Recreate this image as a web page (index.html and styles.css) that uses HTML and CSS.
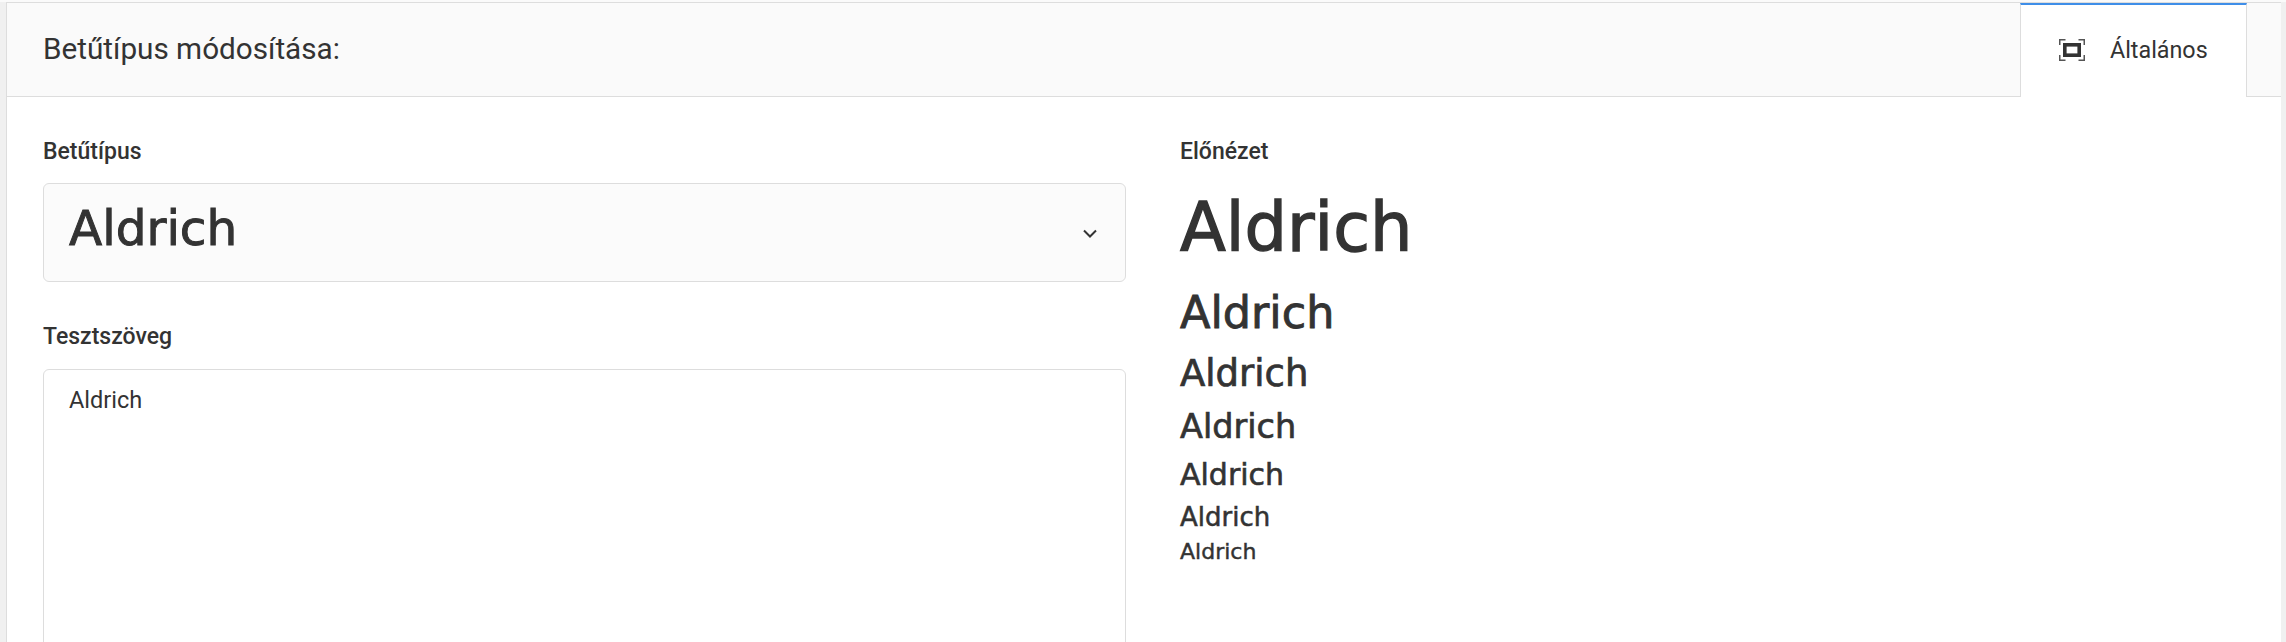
FILE: index.html
```html
<!DOCTYPE html>
<html lang="hu">
<head>
    <meta charset="UTF-8">
    <title>Betűtípus módosítása</title>
    <link rel="stylesheet" href="styles.css">
</head>
<body>
    <div class="panel">
        <div class="panel-head">
            <h2>Betűtípus módosítása:</h2>
            <div class="tab">
                <svg class="tab-icon" width="26" height="22" viewBox="0 0 26 22">
                    <path d="M.75 6V.75H6.5M19.5 .75H25.25V6M25.25 16V21.25H19.5M6.5 21.25H.75V16" fill="none" stroke="#555" stroke-width="1.5"/>
                    <rect x="5.8" y="5.8" width="14.4" height="10.4" fill="none" stroke="#333" stroke-width="3.6"/>
                </svg>
                <span>Általános</span>
            </div>
        </div>
        <div class="panel-body">
            <div class="col">
                <label class="field-label">Betűtípus</label>
                <div class="select-box">
                    <span class="select-value">Aldrich</span>
                    <svg class="chevron" width="14" height="9" viewBox="0 0 14 9">
                        <path d="M1 1.5L7 7.5L13 1.5" fill="none" stroke="#333" stroke-width="2"/>
                    </svg>
                </div>
                <label class="field-label test-label">Tesztszöveg</label>
                <div class="text-box">Aldrich</div>
            </div>
            <div class="col preview">
                <label class="field-label">Előnézet</label>
                <div class="sample s1">Aldrich</div>
                <div class="sample s2">Aldrich</div>
                <div class="sample s3">Aldrich</div>
                <div class="sample s4">Aldrich</div>
                <div class="sample s5">Aldrich</div>
                <div class="sample s6">Aldrich</div>
                <div class="sample s7">Aldrich</div>
            </div>
        </div>
    </div>
</body>
</html>
```

FILE: styles.css
```css
html, body {
    height: 100%;
}
body {
    box-sizing: border-box;
    margin: 0;
    overflow: hidden;
    background: #f0f0f0;
    border-top: 2px solid #fafafa;
    color: #333;
    font-family: Roboto, Arial, sans-serif;
}
.panel {
    box-sizing: border-box;
    height: 100%;
    margin: 0 5px 0 6px;
    background: #fff;
    border-top: 1px solid #ddd;
    border-left: 1px solid #ddd;
}
.panel-head {
    display: flex;
    justify-content: space-between;
    height: 93px;
    padding: 0 34px 0 36px;
    background: #fafafa;
    border-bottom: 1px solid #ddd;
}
.panel-head h2 {
    margin: 0;
    font-size: 29.7px;
    font-weight: 400;
    line-height: 92px;
}
.tab {
    display: flex;
    align-items: center;
    gap: 25px;
    box-sizing: border-box;
    width: 227px;
    height: 94px;
    padding: 0 0 2px 38px;
    background: #fff;
    border-top: 2px solid #3f8ee8;
    border-left: 1px solid #ddd;
    border-right: 1px solid #ddd;
    font-size: 23.3px;
}
.panel-body {
    display: flex;
    gap: 54px;
    padding: 41px 0 0 36px;
}
.col {
    flex: none;
    width: 1083px;
}
.field-label {
    display: block;
    font-size: 23px;
    font-weight: 500;
    line-height: 28px;
}
.select-box {
    display: flex;
    align-items: center;
    justify-content: space-between;
    box-sizing: border-box;
    height: 99px;
    margin-top: 17px;
    padding: 0 28px 0 25px;
    background: #fbfbfb;
    border: 1px solid #ddd;
    border-radius: 6px;
}
.select-value {
    margin-bottom: 10px;
    font-family: "DejaVu Sans", sans-serif;
    font-size: 48.5px;
    -webkit-text-stroke: 0.02em #333;
}
.chevron {
    margin-top: 2px;
}
.test-label {
    margin-top: 41px;
}
.text-box {
    box-sizing: border-box;
    height: 300px;
    margin-top: 18px;
    padding: 13px 25px;
    border: 1px solid #ddd;
    border-radius: 6px;
    font-size: 23.5px;
    line-height: 34px;
}
.sample {
    font-family: "DejaVu Sans", sans-serif;
    line-height: 1;
    -webkit-text-stroke: 0.02em #333;
}
.s1 { margin-top: 29px; font-size: 67px; }
.s2 { margin-top: 29px; font-size: 44.5px; }
.s3 { margin-top: 19px; font-size: 37px; }
.s4 { margin-top: 18px; font-size: 33.5px; }
.s5 { margin-top: 17px; font-size: 30px; }
.s6 { margin-top: 14px; font-size: 26px; }
.s7 { margin-top: 11px; font-size: 22px; }
```
